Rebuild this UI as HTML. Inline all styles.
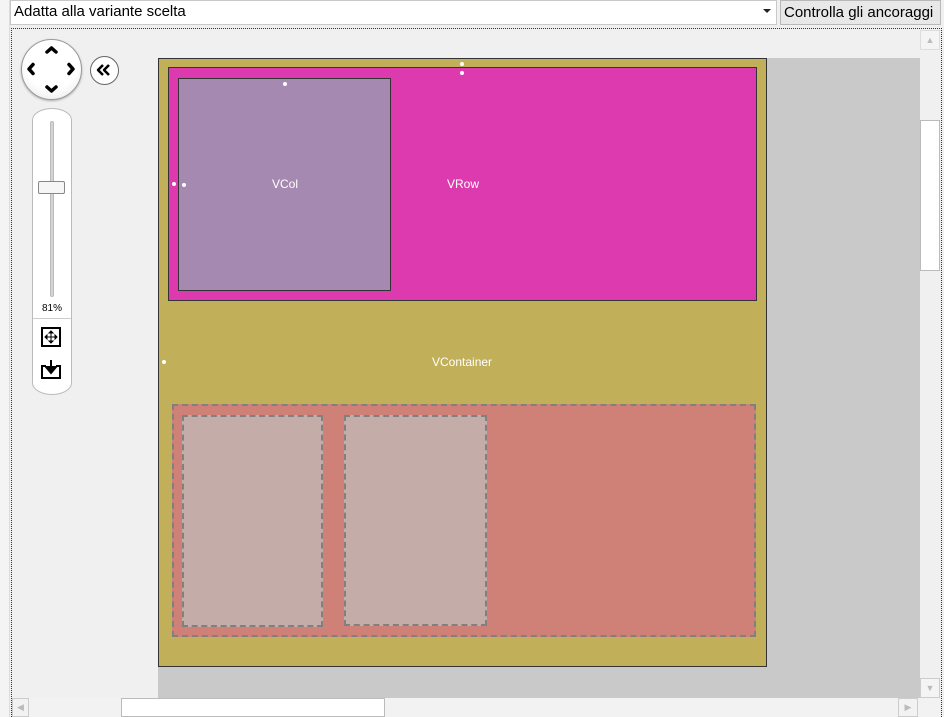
<!DOCTYPE html>
<html><head><style>
*{margin:0;padding:0;box-sizing:border-box}
body{width:944px;height:717px;background:#f0f0f0;position:relative;overflow:hidden;font-family:"Liberation Sans",sans-serif}
.a{position:absolute}
.t{color:#fff;font-size:12px}
.dot{position:absolute;width:4px;height:4px;border-radius:2px;background:#fff}
</style></head><body>
<div class="a" style="left:0;top:0;width:10px;height:717px;background:#f4f4f4;border-right:1px solid #dcdcdc"></div>
<div class="a" style="left:10px;top:0;width:767px;height:25px;background:#fff;border:1px solid #c8c8c8;font-size:15px;line-height:22px;padding-left:3px;color:#000">Adatta alla variante scelta</div>
<div class="a" style="left:763px;top:9px;width:0;height:0;border-left:4px solid transparent;border-right:4px solid transparent;border-top:4px solid #222"></div>
<div class="a" style="left:780px;top:0;width:161px;height:25px;background:#e8e8e8;border:1px solid #b8b8b8;font-size:15px;line-height:23px;padding-left:3px;color:#000">Controlla gli ancoraggi</div>
<div class="a" style="left:11px;top:28px;width:931px;height:689px;border:1px dotted #333;border-bottom:none;background:#f0f0f0"></div>
<div class="a" style="left:158px;top:58px;width:762px;height:640px;background:#c9c9c9"></div>
<div class="a" style="left:920px;top:29px;width:20px;height:669px;background:#f0f0f0"></div>
<div class="a" style="left:920px;top:30px;width:20px;height:20px;border:1px solid #ddd;background:#f4f4f4;color:#bbb;font-size:9px;text-align:center;line-height:18px">▲</div>
<div class="a" style="left:920px;top:120px;width:20px;height:151px;background:#fff;border:1px solid #bbb"></div>
<div class="a" style="left:920px;top:678px;width:20px;height:20px;border:1px solid #ccc;background:#f4f4f4;color:#bbb;font-size:9px;text-align:center;line-height:18px">▼</div>
<div class="a" style="left:12px;top:698px;width:928px;height:19px;background:#f2f2f2"></div>
<div class="a" style="left:12px;top:698px;width:17px;height:19px;border:1px solid #ccc;color:#bbb;font-size:9px;text-align:center;line-height:17px">◀</div>
<div class="a" style="left:121px;top:698px;width:264px;height:19px;background:#fff;border:1px solid #bbb"></div>
<div class="a" style="left:898px;top:698px;width:20px;height:19px;border:1px solid #ccc;color:#bbb;font-size:9px;text-align:center;line-height:17px">▶</div>

<div class="a" style="left:158px;top:58px;width:609px;height:609px;background:#c1af5a;border:1px solid #333"></div>
<div class="a" style="left:168px;top:67px;width:589px;height:234px;background:#dd3ab0;border:1px solid #333"></div>
<div class="a" style="left:178px;top:78px;width:213px;height:213px;background:#a589b0;border:1px solid #333"></div>
<div class="a t" style="left:272px;top:177px">VCol</div>
<div class="a t" style="left:447px;top:177px">VRow</div>
<div class="a t" style="left:432px;top:355px">VContainer</div>
<div class="a" style="left:172px;top:404px;width:584px;height:233px;background:#cf8077;border:2px dashed #808080"></div>
<div class="a" style="left:182px;top:415px;width:141px;height:212px;background:#c4aca8;border:2px dashed #808080"></div>
<div class="a" style="left:344px;top:415px;width:143px;height:211px;background:#c4aca8;border:2px dashed #808080"></div>
<div class="dot" style="left:283px;top:82px"></div>
<div class="dot" style="left:460px;top:62px"></div>
<div class="dot" style="left:460px;top:71px"></div>
<div class="dot" style="left:172px;top:182px"></div>
<div class="dot" style="left:182px;top:183px"></div>
<div class="dot" style="left:162px;top:360px"></div>

<div class="a" style="left:21px;top:39px;width:61px;height:61px;border-radius:50%;background:radial-gradient(circle at 50% 40%,#fff 55%,#e4e4e4);border:1px solid #999;box-shadow:0 1px 2px #aaa"></div>
<svg class="a" style="left:21px;top:39px" width="61" height="61" fill="none" stroke="#000" stroke-width="3.5" stroke-linecap="round" stroke-linejoin="round">
<path d="M26 13l4.5-4 4.5 4M26 48l4.5 4 4.5-4M12 25.5l-4 4.5 4 4.5M48 25.5l4 4.5-4 4.5"/></svg>
<div class="a" style="left:90px;top:56px;width:29px;height:29px;border-radius:50%;background:#fff;border:1px solid #666"></div>
<svg class="a" style="left:90px;top:56px" width="29" height="29" fill="none" stroke="#000" stroke-width="2.5" stroke-linejoin="round"><path d="M13 9l-5 5 5 5M19 9l-5 5 5 5"/></svg>
<div class="a" style="left:32px;top:108px;width:40px;height:287px;background:#fff;border:1px solid #bbb;border-radius:20px/12px"></div>
<div class="a" style="left:50px;top:121px;width:4px;height:176px;background:#d4d4d4;border:1px solid #bbb;border-radius:2px"></div>
<div class="a" style="left:38px;top:181px;width:27px;height:13px;background:#f6f6f6;border:1px solid #888;border-radius:2px"></div>
<div class="a" style="left:33px;top:303px;width:38px;text-align:center;font-size:10px;color:#000">81%</div>
<div class="a" style="left:33px;top:318px;width:38px;height:1px;background:#ccc"></div>
<div class="a" style="left:41px;top:327px;width:20px;height:20px;border:2px solid #000"></div>
<svg class="a" style="left:41px;top:327px" width="20" height="20" stroke="#000" stroke-width="1" fill="#000"><path d="M10 4v12M4 10h12"/><path d="M8 6l2-2 2 2zM8 14l2 2 2-2zM6 8l-2 2 2 2zM14 8l2 2-2 2z"/></svg>
<svg class="a" style="left:40px;top:358px" width="22" height="22" fill="none" stroke="#000" stroke-width="2"><path d="M6 8H2v12h18V8h-4"/><path d="M11 2v11" /><path d="M6 9l5 6 5-6z" fill="#000"/></svg>
</body></html>
